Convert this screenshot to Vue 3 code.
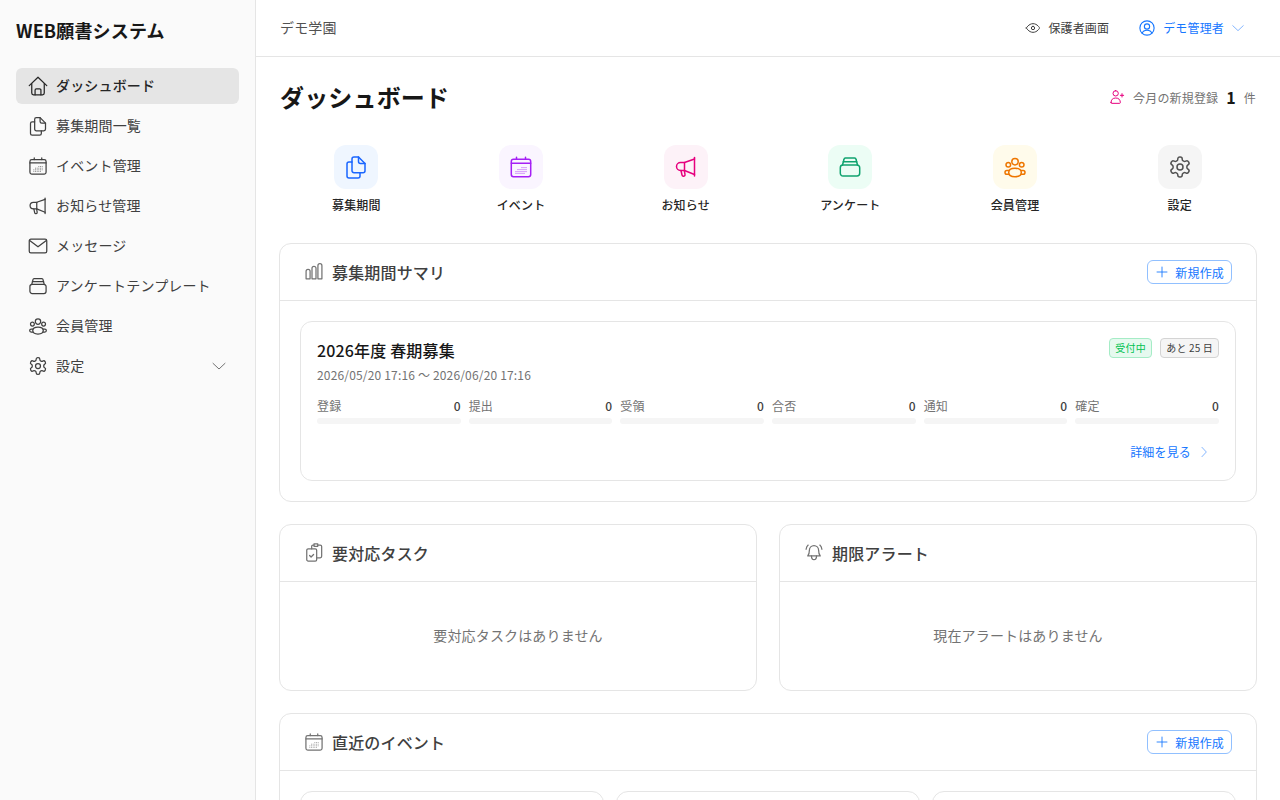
<script setup>
const S = {
  home: ['M1.500 11.500 12 1.500l10.500 10', 'M4.500 9V20.500a2 2 0 0 0 2 2h11a2 2 0 0 0 2-2V9', 'M8.500 22.500V17a1.500 1.500 0 0 1 1.500-1.500h4a1.500 1.500 0 0 1 1.500 1.500v5.500'],
  docs: ['M8 7V4a2 2 0 0 1 2-2h4.500L21 8.500v7.200a2 2 0 0 1-2 2h-3', 'M14.500 2v4.500a2 2 0 0 0 2 2H21', 'M5 7h3v8.700a2 2 0 0 0 2 2h6V21a2 2 0 0 1-2 2H5a2 2 0 0 1-2-2V9a2 2 0 0 1 2-2z'],
  calendar: ['M4.500 4.300h15a2.200 2.200 0 0 1 2.200 2.200v13a2.200 2.200 0 0 1-2.200 2.200h-15a2.200 2.200 0 0 1-2.200-2.200v-13a2.200 2.200 0 0 1 2.200-2.200z', 'M2.300 8.300h19.400', 'M7.500 2.300v2M16.500 2.300v2'],
  megaphone: ['M20.500 2.500v18.500', 'M20.500 4 10.500 7.500h-4a4 4 0 0 0 0 8h4l10 4', 'M10.500 7.500v8', 'M7 15.500l1 4.500a1.500 1.500 0 0 0 3-.700l-.700-3.800'],
  mail: ['M3.500 3.800h17a2 2 0 0 1 2 2v12.400a2 2 0 0 1-2 2h-17a2 2 0 0 1-2-2V5.800a2 2 0 0 1 2-2z', 'M2 5.500 12 13l10-7.500'],
  stack: ['M5 10h14a2.700 2.700 0 0 1 2.700 2.700v5.600A2.700 2.700 0 0 1 19 21H5a2.700 2.700 0 0 1-2.700-2.700v-5.600A2.700 2.700 0 0 1 5 10z', 'M4.500 10 6 4.300A1.500 1.500 0 0 1 7.400 3h9.200a1.500 1.500 0 0 1 1.400 1.300L19.500 10', 'M5.300 6.700h13.400'],
  people: ['M12 3.500a3.200 3.200 0 1 0 0 6.400 3.200 3.200 0 0 0 0-6.400z', 'M5.300 7.400a2.300 2.300 0 1 0 0 4.600 2.300 2.300 0 0 0 0-4.600z', 'M18.700 7.400a2.300 2.300 0 1 0 0 4.600 2.300 2.300 0 0 0 0-4.600z', 'M12 13.300c-3.700 0-6.300 1.700-6.300 4.200s2.600 4.200 6.300 4.200 6.300-1.700 6.300-4.200-2.600-4.200-6.300-4.200z', 'M6 15.600H3.800a1.800 1.800 0 0 0 0 3.600H6', 'M18 15.600h2.200a1.800 1.800 0 0 1 0 3.600H18'],
  gear: ['M12.220 2h-.440a2 2 0 0 0-2 2v.180a2 2 0 0 1-1 1.730l-.430.250a2 2 0 0 1-2 0l-.150-.080a2 2 0 0 0-2.730.730l-.220.380a2 2 0 0 0 .730 2.730l.150.100a2 2 0 0 1 1 1.720v.510a2 2 0 0 1-1 1.740l-.150.090a2 2 0 0 0-.730 2.730l.220.380a2 2 0 0 0 2.730.730l.150-.080a2 2 0 0 1 2 0l.430.250a2 2 0 0 1 1 1.730V20a2 2 0 0 0 2 2h.440a2 2 0 0 0 2-2v-.180a2 2 0 0 1 1-1.730l.430-.250a2 2 0 0 1 2 0l.150.080a2 2 0 0 0 2.730-.730l.220-.390a2 2 0 0 0-.730-2.730l-.150-.080a2 2 0 0 1-1-1.740v-.500a2 2 0 0 1 1-1.740l.150-.090a2 2 0 0 0 .730-2.730l-.220-.380a2 2 0 0 0-2.730-.730l-.150.080a2 2 0 0 1-2 0l-.430-.250a2 2 0 0 1-1-1.730V4a2 2 0 0 0-2-2z', 'M12 9a3 3 0 1 0 0 6 3 3 0 0 0 0-6z'],
  chevron: ['M3 8l9 8.500L21 8'],
  right: ['M8.500 4l7.500 8-7.500 8'],
  eye: ['M2 12s3.500-6.500 10-6.500S22 12 22 12s-3.500 6.500-10 6.500S2 12 2 12z', 'M12 9.500a2.500 2.500 0 1 0 0 5 2.500 2.500 0 0 0 0-5z'],
  user: ['M12 2.500a9.500 9.500 0 1 0 0 19 9.500 9.500 0 0 0 0-19z', 'M12 6.500a3.500 3.500 0 1 0 0 7 3.500 3.500 0 0 0 0-7z', 'M5.500 19c1-3 3.500-4 6.500-4s5.500 1 6.500 4'],
  userPlus: ['M10 2.500a4 4 0 1 0 0 8 4 4 0 0 0 0-8z', 'M3 20.500c0-4.500 2.500-7 7-7s7 2.500 7 7c0 .500-.500 1-1 1H4c-.500 0-1-.500-1-1z', 'M19.500 7v5M17 9.500h5'],
  bars: ['M4.900 8.700a2.400 2.400 0 0 1 2.400 2.400v9.100H2.500v-9.100a2.400 2.400 0 0 1 2.400-2.400z', 'M12 5.200a2.400 2.400 0 0 1 2.400 2.400v12.600H9.600V7.600A2.400 2.400 0 0 1 12 5.200z', 'M19.100 2a2.400 2.400 0 0 1 2.400 2.400v15.800h-4.800V4.400A2.400 2.400 0 0 1 19.100 2z'],
  tasks: ['M5 7h8.500a1.700 1.700 0 0 1 1.700 1.700V20a1.700 1.700 0 0 1-1.700 1.700H5A1.700 1.700 0 0 1 3.300 20V8.700A1.700 1.700 0 0 1 5 7z', 'M9.200 7V4a1.500 1.500 0 0 1 1.500-1.500H12', 'M12 1h4.500v3H12z', 'M16.500 2.500h3a1.700 1.700 0 0 1 1.700 1.700V16a1.700 1.700 0 0 1-1.700 1.700h-4.300', 'M6.700 15l1.800 1.800 3-3'],
  bell: ['M12 3a5.500 5.500 0 0 0-5.500 5.500c0 4-.800 5.500-2 7h15c-1.200-1.500-2-3-2-7A5.500 5.500 0 0 0 12 3z', 'M9 15.500c0 6 6 6 6 0', 'M2.500 7.500c.300-2 1.100-3.800 2.500-5', 'M21.500 7.500c-.300-2-1.100-3.800-2.500-5'],
  plus: ['M12 3.500v17M3.500 12h17']
}

const nav = [
  { icon: 'home', label: 'ダッシュボード', active: true },
  { icon: 'docs', label: '募集期間一覧' },
  { icon: 'calendar', label: 'イベント管理', dots: true },
  { icon: 'megaphone', label: 'お知らせ管理' },
  { icon: 'mail', label: 'メッセージ' },
  { icon: 'stack', label: 'アンケートテンプレート' },
  { icon: 'people', label: '会員管理' },
  { icon: 'gear', label: '設定', more: true }
]

const quick = [
  { icon: 'docs', label: '募集期間', tone: 'blue' },
  { icon: 'calendar', label: 'イベント', tone: 'purple', dots: true },
  { icon: 'megaphone', label: 'お知らせ', tone: 'pink' },
  { icon: 'stack', label: 'アンケート', tone: 'green' },
  { icon: 'people', label: '会員管理', tone: 'orange' },
  { icon: 'gear', label: '設定', tone: 'gray' }
]

const stats = ['登録', '提出', '受領', '合否', '通知', '確定']
const dots = [
  [13, 12.6], [15, 12.6], [17, 12.6],
  [9, 14.6], [11, 14.6], [13, 14.6], [15, 14.6], [17, 14.6],
  [7, 16.6], [9, 16.6], [11, 16.6], [13, 16.6], [15, 16.6], [17, 16.6],
  [7, 18.4], [9, 18.4], [11, 18.4], [13, 18.4], [15, 18.4]
]
</script>

<template>
  <div class="layout">
    <aside class="side">
      <div class="logo">WEB願書システム</div>
      <nav class="nav">
        <a v-for="n in nav" :key="n.label" class="nav-item" :class="{ active: n.active }">
          <svg class="ic20" viewBox="0 0 24 24">
            <path v-for="d in S[n.icon]" :key="d" :d="d" />
            <template v-if="n.dots"><rect v-for="p in dots" :key="p.join()" class="dot" :x="p[0] - 0.5" :y="p[1] - 0.5" width="1" height="1" /></template>
          </svg>
          <span class="nav-label">{{ n.label }}</span>
          <svg v-if="n.more" class="ic16 nav-more" viewBox="0 0 24 24"><path :d="S.chevron[0]" /></svg>
        </a>
      </nav>
    </aside>

    <div class="main">
      <header class="top">
        <span class="school">デモ学園</span>
        <div class="top-right">
          <a class="guardian">
            <svg class="ic16" viewBox="0 0 24 24"><path v-for="d in S.eye" :key="d" :d="d" /></svg>
            保護者画面
          </a>
          <a class="account">
            <svg class="ic18" viewBox="0 0 24 24"><path v-for="d in S.user" :key="d" :d="d" /></svg>
            デモ管理者
            <svg class="ic14 account-more" viewBox="0 0 24 24"><path :d="S.chevron[0]" /></svg>
          </a>
        </div>
      </header>

      <main class="content">
        <div class="page-head">
          <h1>ダッシュボード</h1>
          <div class="monthly">
            <svg class="ic16 pink-ic" viewBox="0 0 24 24"><path v-for="d in S.userPlus" :key="d" :d="d" /></svg>
            <span class="monthly-text">今月の新規登録</span>
            <b>1</b>
            <span class="monthly-text">件</span>
          </div>
        </div>

        <div class="quick">
          <a v-for="q in quick" :key="q.label" class="quick-item">
            <span class="quick-icon" :class="q.tone">
              <svg class="ic24" viewBox="0 0 24 24">
                <path v-for="d in S[q.icon]" :key="d" :d="d" />
                <template v-if="q.dots"><rect v-for="p in dots" :key="p.join()" class="dot" :x="p[0] - 0.5" :y="p[1] - 0.5" width="1" height="1" /></template>
              </svg>
            </span>
            <span class="quick-label">{{ q.label }}</span>
          </a>
        </div>

        <section class="card">
          <div class="card-head">
            <h2>
              <svg class="ic20" viewBox="0 0 24 24"><path v-for="d in S.bars" :key="d" :d="d" /></svg>
              募集期間サマリ
            </h2>
            <button class="btn-new">
              <svg class="ic14" viewBox="0 0 24 24"><path :d="S.plus[0]" /></svg>
              新規作成
            </button>
          </div>
          <div class="card-body">
            <div class="period">
              <div class="period-top">
                <div>
                  <div class="period-title">2026年度 春期募集</div>
                  <div class="period-date">2026/05/20 17:16 〜 2026/06/20 17:16</div>
                </div>
                <div class="tags">
                  <span class="tag open">受付中</span>
                  <span class="tag left">あと 25 日</span>
                </div>
              </div>
              <div class="stats">
                <div v-for="s in stats" :key="s" class="stat">
                  <div class="stat-row"><span>{{ s }}</span><b>0</b></div>
                  <div class="bar"></div>
                </div>
              </div>
              <div class="period-foot">
                <a class="detail">
                  詳細を見る
                  <svg class="ic14" viewBox="0 0 24 24"><path :d="S.right[0]" /></svg>
                </a>
              </div>
            </div>
          </div>
        </section>

        <div class="two">
          <section class="card">
            <div class="card-head">
              <h2>
                <svg class="ic20" viewBox="0 0 24 24"><path v-for="d in S.tasks" :key="d" :d="d" /></svg>
                要対応タスク
              </h2>
            </div>
            <div class="empty">要対応タスクはありません</div>
          </section>
          <section class="card">
            <div class="card-head">
              <h2>
                <svg class="ic20" viewBox="0 0 24 24"><path v-for="d in S.bell" :key="d" :d="d" /></svg>
                期限アラート
              </h2>
            </div>
            <div class="empty">現在アラートはありません</div>
          </section>
        </div>

        <section class="card">
          <div class="card-head">
            <h2>
              <svg class="ic20" viewBox="0 0 24 24">
                <path v-for="d in S.calendar" :key="d" :d="d" />
                <rect v-for="p in dots" :key="p.join()" class="dot" :x="p[0] - 0.5" :y="p[1] - 0.5" width="1" height="1" />
              </svg>
              直近のイベント
            </h2>
            <button class="btn-new">
              <svg class="ic14" viewBox="0 0 24 24"><path :d="S.plus[0]" /></svg>
              新規作成
            </button>
          </div>
          <div class="card-body events">
            <div v-for="i in 3" :key="i" class="event"></div>
          </div>
        </section>
      </main>
    </div>
  </div>
</template>

<style>
html, body { margin: 0; height: 100%; overflow: hidden; background: #fff; }
</style>

<style scoped>
* { box-sizing: border-box; }
.layout {
  display: flex;
  height: 800px;
  overflow: hidden;
  font-family: "Noto Sans CJK JP", "Noto Sans", sans-serif;
  letter-spacing: 0.01em;
  color: #171717;
}
svg { display: block; flex: none; fill: none; stroke: currentColor; stroke-width: 1.5; stroke-linecap: round; stroke-linejoin: round; }
.ic14 { width: 14px; height: 14px; }
.ic16 { width: 16px; height: 16px; }
.ic18 { width: 18px; height: 18px; }
.ic20 { width: 20px; height: 20px; }
.ic24 { width: 24px; height: 24px; }
.dot { fill: currentColor; stroke: none; opacity: 0.8; }

.side {
  width: 256px;
  flex: none;
  padding: 16px;
  background: #fafafa;
  border-right: 1px solid #e5e5e5;
}
.logo { height: 28px; font-size: 18px; line-height: 28px; font-weight: 700; color: #171717; }
.nav { display: flex; flex-direction: column; gap: 4px; margin-top: 24px; }
.nav-item {
  display: flex;
  align-items: center;
  gap: 8px;
  height: 36px;
  padding: 0 12px;
  border-radius: 6px;
  font-size: 14px;
  color: #404040;
}
.nav-item.active { background: #e5e5e5; color: #262626; font-weight: 500; }
.nav-label { flex: 1; padding-bottom: 2px; }
.nav-more { color: #737373; }

.main { flex: 1; min-width: 0; display: flex; flex-direction: column; }
.top {
  height: 57px;
  flex: none;
  display: flex;
  align-items: center;
  justify-content: space-between;
  padding: 0 24px;
  border-bottom: 1px solid #e5e5e5;
  background: #fff;
}
.school { font-size: 14px; color: #525252; padding-bottom: 2px; }
.top-right { display: flex; align-items: center; gap: 29px; padding-right: 11px; }
.guardian, .account { display: flex; align-items: center; gap: 7px; font-size: 12px; line-height: 16px; }
.guardian { color: #404040; }
.account { color: #1677ff; }
.account-more { color: #74abff; }

.content { flex: 1; min-height: 0; padding: 22px 23px 0; overflow: hidden; }
.page-head { display: flex; align-items: center; justify-content: space-between; height: 36px; margin: 0 1px; }
h1 { margin: 0; font-size: 24px; line-height: 36px; font-weight: 700; color: #171717; }
.monthly { display: flex; align-items: center; gap: 8px; }
.monthly b { font-size: 16px; font-weight: 700; color: #171717; }
.monthly-text { font-size: 12px; color: #737373; }
.pink-ic { color: #e6007e; }

.quick { display: grid; grid-template-columns: repeat(6, 1fr); gap: 12px; margin: 30px 1px 0; }
.quick-item { display: flex; flex-direction: column; align-items: center; gap: 8px; }
.quick-icon { display: flex; align-items: center; justify-content: center; width: 44px; height: 44px; border-radius: 12px; }
.quick-label { font-size: 12px; line-height: 16px; font-weight: 500; color: #262626; }
.blue { background: #eff6ff; color: #1a66ff; }
.purple { background: #faf5ff; color: #a520f5; }
.pink { background: #fdf2f8; color: #e6007e; }
.green { background: #ecfdf5; color: #10a36f; }
.orange { background: #fffbeb; color: #ee7600; }
.gray { background: #f5f5f5; color: #525252; }

.card { background: #fff; border: 1px solid #e5e5e5; border-radius: 12px; margin-top: 22px; overflow: hidden; }
.quick + .card { margin-top: 30px; }
.card-head {
  display: flex;
  align-items: center;
  justify-content: space-between;
  height: 57px;
  padding: 0 24px;
  border-bottom: 1px solid #e5e5e5;
}
h2 { display: flex; align-items: center; gap: 8px; margin: 0; font-size: 16px; font-weight: 500; color: #404040; }
h2 svg { color: #737373; }
.btn-new {
  display: flex;
  align-items: center;
  gap: 6px;
  height: 24px;
  padding: 0 7px;
  background: #fff;
  border: 1px solid #91c0ff;
  border-radius: 6px;
  font: inherit;
  font-size: 12px;
  letter-spacing: inherit;
  color: #1677ff;
}
.card-body { padding: 20px; }
.period { height: 160px; padding: 16px; border: 1px solid #e5e5e5; border-radius: 12px; }
.period-top { display: flex; justify-content: space-between; }
.period-title { font-size: 16px; line-height: 24px; font-weight: 500; color: #171717; }
.period-date { margin-top: 3px; font-size: 12px; line-height: 20px; letter-spacing: 0.014em; color: #737373; }
.tags { display: flex; gap: 8px; align-items: flex-start; }
.tag { height: 20px; padding: 0 5.5px; border-radius: 4px; border: 1px solid; font-size: 10px; line-height: 18px; }
.tag.open { background: #e6f9ef; border-color: #a5ecc6; color: #00c250; }
.tag.left { padding: 0 5px; background: #f5f5f5; border-color: #d4d4d4; color: #404040; }
.stats { display: grid; grid-template-columns: repeat(6, 1fr); gap: 8px; margin-top: 11px; }
.stat-row { display: flex; justify-content: space-between; align-items: center; height: 18px; font-size: 12px; color: #737373; }
.stat-row b { font-weight: 500; color: #404040; }
.bar { height: 6px; margin-top: 4px; border-radius: 3px; background: #f5f5f5; }
.period-foot { display: flex; justify-content: flex-end; margin-top: 18px; padding-right: 8px; }
.detail { display: flex; align-items: center; gap: 6px; font-size: 12px; line-height: 20px; color: #1677ff; }
.detail svg { color: #74abff; }

.two { display: grid; grid-template-columns: 1fr 1fr; gap: 22px; }
.empty { height: 108px; padding-bottom: 2px; display: flex; align-items: center; justify-content: center; font-size: 14px; color: #737373; }
.events { display: grid; grid-template-columns: repeat(3, 1fr); gap: 12px; }
.event { height: 120px; border: 1px solid #e5e5e5; border-radius: 12px; }
</style>
